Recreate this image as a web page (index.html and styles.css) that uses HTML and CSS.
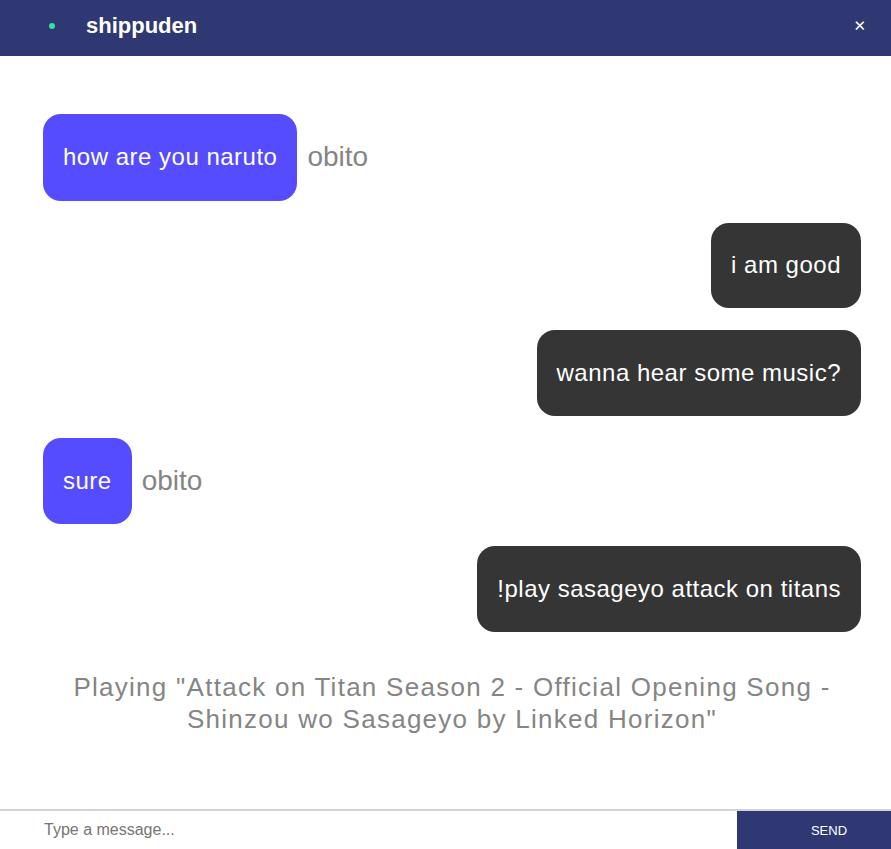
FILE: index.html
```html
<!DOCTYPE html>
<html lang="en">
<head>
<meta charset="utf-8">
<title>shippuden</title>
<link rel="stylesheet" href="styles.css">
</head>
<body>
<div class="app">
  <header class="topbar">
    <span class="status-dot"></span>
    <h1 class="room-name">shippuden</h1>
    <button class="close-btn" type="button" aria-label="Close">&#x2715;</button>
  </header>
  <main class="chat">
    <div class="msg msg-in">
      <div class="bubble bubble-in">how are you naruto</div>
      <span class="author">obito</span>
    </div>
    <div class="msg msg-out">
      <div class="bubble bubble-out">i am good</div>
    </div>
    <div class="msg msg-out">
      <div class="bubble bubble-out">wanna hear some music?</div>
    </div>
    <div class="msg msg-in">
      <div class="bubble bubble-in">sure</div>
      <span class="author">obito</span>
    </div>
    <div class="msg msg-out">
      <div class="bubble bubble-out">!play sasageyo attack on titans</div>
    </div>
    <p class="system-note">Playing "Attack on Titan Season 2 - Official Opening Song - Shinzou wo Sasageyo by Linked Horizon"</p>
  </main>
  <form class="composer">
    <input class="composer-input" type="text" placeholder="Type a message...">
    <button class="send-btn" type="button">SEND</button>
  </form>
</div>
</body>
</html>
```

FILE: styles.css
```css
html, body {
  margin: 0;
  padding: 0;
  height: 100%;
}

body {
  font-family: "Liberation Sans", Arial, sans-serif;
  background: #ffffff;
}

.app {
  display: flex;
  flex-direction: column;
  height: 100vh;
}

.topbar {
  display: flex;
  align-items: center;
  height: 56px;
  background: #303874;
  padding: 0 25px 4px 49px;
  box-sizing: border-box;
  flex-shrink: 0;
}

.status-dot {
  width: 6px;
  height: 6px;
  border-radius: 50%;
  background: #2de3a0;
  margin-right: 31px;
}

.room-name {
  margin: 0;
  font-size: 22px;
  font-weight: bold;
  color: #ffffff;
  flex: 1;
}

.close-btn {
  background: none;
  border: 0;
  padding: 0;
  color: #ffffff;
  font-family: "DejaVu Sans", sans-serif;
  font-size: 15px;
  font-weight: bold;
  line-height: 1;
  cursor: pointer;
}

.chat {
  flex: 1;
  display: flex;
  flex-direction: column;
  gap: 22px;
  padding: 58px 30px 0 43px;
  overflow: hidden;
}

.msg {
  display: flex;
  align-items: center;
}

.msg-out {
  justify-content: flex-end;
}

.bubble {
  font-size: 24px;
  letter-spacing: 0.5px;
  line-height: normal;
  border-radius: 18px;
  color: #ffffff;
}

.bubble-in {
  padding: 29.3px 20px;
  background: #554bff;
}

.bubble-out {
  padding: 28.8px 20px;
  background: #353535;
}

.author {
  margin-left: 10px;
  font-size: 28px;
  color: #858585;
}

.system-note {
  margin: 17px 0 0 0;
  text-align: center;
  font-size: 26px;
  letter-spacing: 1.27px;
  line-height: 32px;
  color: #858585;
}

.composer {
  display: flex;
  height: 40px;
  border-top: 2px solid #d3d3d3;
  box-sizing: border-box;
  flex-shrink: 0;
  margin: 0;
}

.composer-input {
  flex: 1;
  border: 0;
  outline: none;
  padding: 0 0 0 44px;
  font-family: "Liberation Sans", Arial, sans-serif;
  font-size: 16px;
  color: #333;
  background: #fff;
}

.composer-input::placeholder {
  color: #757575;
}

.send-btn {
  width: 154px;
  border: 0;
  padding: 0 0 0 30px;
  background: #303874;
  color: #ffffff;
  font-family: "Liberation Sans", Arial, sans-serif;
  font-size: 13px;
  cursor: pointer;
}
```
